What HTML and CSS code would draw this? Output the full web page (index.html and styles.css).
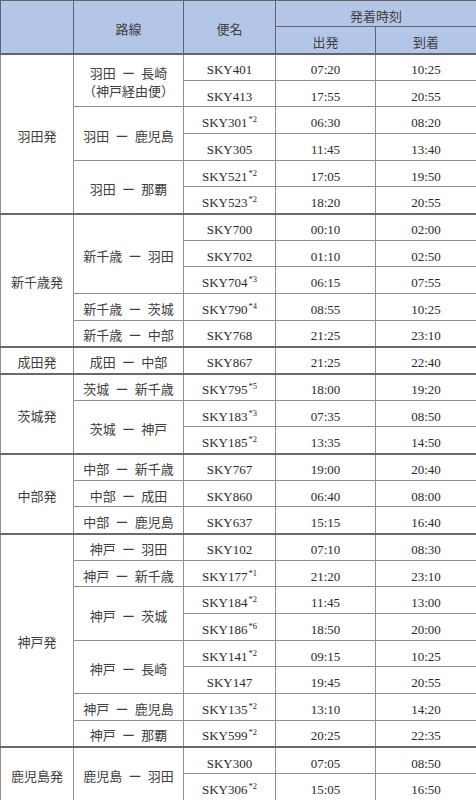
FILE: index.html
```html
<!DOCTYPE html>
<html lang="ja">
<head>
<meta charset="utf-8">
<title>時刻表</title>
<link rel="stylesheet" href="styles.css">
</head>
<body>
<table class="tt">
  <colgroup>
    <col class="c1"><col class="c2"><col class="c3"><col class="c4"><col class="c5">
  </colgroup>
  <thead>
    <tr class="h1">
      <th rowspan="2" class="hb"></th>
      <th rowspan="2" class="hb">路線</th>
      <th rowspan="2" class="hb">便名</th>
      <th colspan="2">発着時刻</th>
    </tr>
    <tr class="h2">
      <th class="hb">出発</th>
      <th class="hb">到着</th>
    </tr>
  </thead>
  <tbody class="g">
    <tr><td rowspan="6" class="dep">羽田発</td><td rowspan="2" class="route two">羽田 ー 長崎<br>（神戸経由便）</td><td>SKY401</td><td>07:20</td><td>10:25</td></tr>
    <tr><td>SKY413</td><td>17:55</td><td>20:55</td></tr>
    <tr><td rowspan="2" class="route">羽田 ー 鹿児島</td><td>SKY301<sup>*2</sup></td><td>06:30</td><td>08:20</td></tr>
    <tr><td>SKY305</td><td>11:45</td><td>13:40</td></tr>
    <tr><td rowspan="2" class="route">羽田 ー 那覇</td><td>SKY521<sup>*2</sup></td><td>17:05</td><td>19:50</td></tr>
    <tr><td>SKY523<sup>*2</sup></td><td>18:20</td><td>20:55</td></tr>
  </tbody>
  <tbody class="g">
    <tr><td rowspan="5" class="dep">新千歳発</td><td rowspan="3" class="route">新千歳 ー 羽田</td><td>SKY700</td><td>00:10</td><td>02:00</td></tr>
    <tr><td>SKY702</td><td>01:10</td><td>02:50</td></tr>
    <tr><td>SKY704<sup>*3</sup></td><td>06:15</td><td>07:55</td></tr>
    <tr><td class="route">新千歳 ー 茨城</td><td>SKY790<sup>*4</sup></td><td>08:55</td><td>10:25</td></tr>
    <tr><td class="route">新千歳 ー 中部</td><td>SKY768</td><td>21:25</td><td>23:10</td></tr>
  </tbody>
  <tbody class="g">
    <tr><td class="dep">成田発</td><td class="route">成田 ー 中部</td><td>SKY867</td><td>21:25</td><td>22:40</td></tr>
  </tbody>
  <tbody class="g">
    <tr><td rowspan="3" class="dep">茨城発</td><td class="route">茨城 ー 新千歳</td><td>SKY795<sup>*5</sup></td><td>18:00</td><td>19:20</td></tr>
    <tr><td rowspan="2" class="route">茨城 ー 神戸</td><td>SKY183<sup>*3</sup></td><td>07:35</td><td>08:50</td></tr>
    <tr><td>SKY185<sup>*2</sup></td><td>13:35</td><td>14:50</td></tr>
  </tbody>
  <tbody class="g">
    <tr><td rowspan="3" class="dep">中部発</td><td class="route">中部 ー 新千歳</td><td>SKY767</td><td>19:00</td><td>20:40</td></tr>
    <tr><td class="route">中部 ー 成田</td><td>SKY860</td><td>06:40</td><td>08:00</td></tr>
    <tr><td class="route">中部 ー 鹿児島</td><td>SKY637</td><td>15:15</td><td>16:40</td></tr>
  </tbody>
  <tbody class="g">
    <tr><td rowspan="8" class="dep">神戸発</td><td class="route">神戸 ー 羽田</td><td>SKY102</td><td>07:10</td><td>08:30</td></tr>
    <tr><td class="route">神戸 ー 新千歳</td><td>SKY177<sup>*1</sup></td><td>21:20</td><td>23:10</td></tr>
    <tr><td rowspan="2" class="route">神戸 ー 茨城</td><td>SKY184<sup>*2</sup></td><td>11:45</td><td>13:00</td></tr>
    <tr><td>SKY186<sup>*6</sup></td><td>18:50</td><td>20:00</td></tr>
    <tr><td rowspan="2" class="route">神戸 ー 長崎</td><td>SKY141<sup>*2</sup></td><td>09:15</td><td>10:25</td></tr>
    <tr><td>SKY147</td><td>19:45</td><td>20:55</td></tr>
    <tr><td class="route">神戸 ー 鹿児島</td><td>SKY135<sup>*2</sup></td><td>13:10</td><td>14:20</td></tr>
    <tr><td class="route">神戸 ー 那覇</td><td>SKY599<sup>*2</sup></td><td>20:25</td><td>22:35</td></tr>
  </tbody>
  <tbody class="g">
    <tr><td rowspan="2" class="dep">鹿児島発</td><td rowspan="2" class="route">鹿児島 ー 羽田</td><td>SKY300</td><td>07:05</td><td>08:50</td></tr>
    <tr><td>SKY306<sup>*2</sup></td><td>15:05</td><td>16:50</td></tr>
  </tbody>
</table>
</body>
</html>
```
FILE: styles.css
```css
html, body {
  margin: 0;
  padding: 0;
  background: #ffffff;
}

.tt {
  border-collapse: collapse;
  table-layout: fixed;
  width: 476px;
  font-family: "Liberation Serif", "Noto Sans CJK JP", serif;
  font-size: 13px;
  color: #2a2a2a;
}

.c1 { width: 73px; }
.c2 { width: 110px; }
.c3 { width: 92px; }
.c4 { width: 100px; }
.c5 { width: 101px; }

.tt th,
.tt td {
  border: 1px solid #8f8f8f;
  text-align: center;
  vertical-align: middle;
  padding: 6px 0 0;
  line-height: 18px;
  font-weight: normal;
  white-space: nowrap;
}

.tt th {
  background: #b4c6e7;
  border-color: #5f6470;
  color: #404040;
}

.h1 { height: 26px; }
.h2 { height: 27px; }

.tt th.hb {
  border-bottom: 2px solid #666666;
}

.tt tbody tr {
  height: 26.68px;
}

.tt tbody.g tr:first-child td {
  border-top: 2px solid #6a6a6a;
}

.route,
.dep {
  color: #404040;
}

.route {
  word-spacing: 3px;
}

.two {
  line-height: 23px;
}

.tt sup {
  font-size: 8.5px;
  line-height: 0;
  vertical-align: 5px;
  margin-left: 1px;
}
```
